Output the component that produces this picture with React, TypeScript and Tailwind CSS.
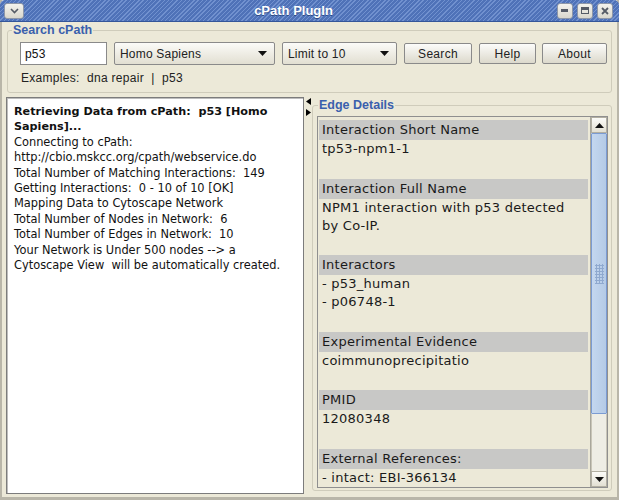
import React from "react";

const SANS = "font-['Liberation_Sans',Arial,sans-serif]";
const DEJA = "font-['DejaVu_Sans',Verdana,sans-serif]";

const WinButton = ({ children, wide }: { children: React.ReactNode; wide?: boolean }) => (
  <div
    className={`flex items-center justify-center ${
      wide ? "w-[20px]" : "w-[16px]"
    } h-[16px] rounded-[3px] border border-[#8e97a8] bg-gradient-to-b from-[#f4f3ee] to-[#d9d7cd]`}
  >
    {children}
  </div>
);

const Combo = ({ label, width }: { label: string; width: string }) => (
  <div
    className={`${width} h-[23px] flex items-center justify-between pl-[5px] pr-[7px] rounded-[2px] border border-[#8a8a8a] bg-gradient-to-b from-[#fbfbf8] to-[#e2dfd2] text-[12px] tracking-[0.2px] text-[#222]`}
  >
    <span>{label}</span>
    <svg width="9" height="5" viewBox="0 0 9 5">
      <polygon points="0,0 9,0 4.5,5" fill="#111" />
    </svg>
  </div>
);

const Button = ({ label, width }: { label: string; width: string }) => (
  <div
    className={`${width} h-[21px] flex items-center justify-center rounded-[2px] border border-[#8a8a8a] bg-gradient-to-b from-[#fcfcfa] to-[#dcd9cc] text-[12px] tracking-[0.3px] text-[#222]`}
  >
    {label}
  </div>
);

const Section = ({ title, lines }: { title: string; lines: string[] }) => (
  <div className="mb-[20.5px]">
    <div className="h-[20px] leading-[20px] bg-[#c8c8c6] pl-[3px] tracking-[0.25px]">{title}</div>
    {lines.map((l) => (
      <div key={l} className="leading-[18px] pl-[3px] tracking-[0.25px] whitespace-nowrap">
        {l}
      </div>
    ))}
  </div>
);

const logLines = [
  "Connecting to cPath:",
  "http://cbio.mskcc.org/cpath/webservice.do",
  "Total Number of Matching Interactions:  149",
  "Getting Interactions:  0 - 10 of 10 [OK]",
  "Mapping Data to Cytoscape Network",
  "Total Number of Nodes in Network:  6",
  "Total Number of Edges in Network:  10",
  "Your Network is Under 500 nodes --> a",
  "Cytoscape View  will be automatically created.",
];

export default function App() {
  return (
    <div className={`w-[619px] h-[500px] flex flex-col bg-[#ece9d8] border-x-[2px] border-b-[3px] border-[#b9b6a9] ${SANS}`}>
      {/* title bar */}
      <div className="h-[22px] -mx-[2px] flex items-center justify-between px-[4px] rounded-t-[5px] border-b border-[#34569a] bg-[repeating-linear-gradient(135deg,#4f72b8_0px,#4f72b8_2px,#7191cf_2px,#7191cf_3px)]">
        <WinButton wide>
          <svg width="9" height="6" viewBox="0 0 9 6">
            <polyline points="1,1 4.5,4.5 8,1" fill="none" stroke="#555b66" strokeWidth="1.6" />
          </svg>
        </WinButton>
        <div className="text-white font-bold text-[13px] ml-[6px] [text-shadow:0_1px_0_#2d4a85]">cPath PlugIn</div>
        <div className="flex gap-[4px] pr-[2px]">
          <WinButton>
            <div className="w-[7px] h-[3px] bg-[#555b66]" />
          </WinButton>
          <WinButton>
            <div className="w-[8px] h-[7px] border-[1.5px] border-t-[3px] border-[#555b66]" />
          </WinButton>
          <WinButton>
            <svg width="8" height="8" viewBox="0 0 8 8">
              <path d="M1 1 L7 7 M7 1 L1 7" stroke="#555b66" strokeWidth="1.8" />
            </svg>
          </WinButton>
        </div>
      </div>

      <div className="flex-1 flex flex-col pl-[4px] pr-[5px]">
        {/* search group */}
        <fieldset className="mt-[1px] ml-[1px] border border-[#cfccbb] rounded-[3px]">
          <legend className="ml-[4px] px-[1px] text-[12.5px] leading-[15px] font-bold text-[#3a60ad]">Search cPath</legend>
          <div className="pl-[12px] pt-[4px]">
            <div className="flex items-center">
              <div className="w-[87px] h-[23px] bg-white border border-[#8a8a8a] flex items-center pl-[4px] text-[12px] tracking-[0.2px] text-[#111]">
                p53
              </div>
              <div className="ml-[7px]">
                <Combo label="Homo Sapiens" width="w-[161px]" />
              </div>
              <div className="ml-[7px]">
                <Combo label="Limit to 10" width="w-[115px]" />
              </div>
              <div className="ml-[7px]">
                <Button label="Search" width="w-[68px]" />
              </div>
              <div className="ml-[7px]">
                <Button label="Help" width="w-[57px]" />
              </div>
              <div className="ml-[6px]">
                <Button label="About" width="w-[65px]" />
              </div>
            </div>
            <div className="mt-[6px] pb-[6px] pl-[1px] text-[12px] tracking-[0.3px] leading-[15px] text-[#222] whitespace-pre">
              Examples:  dna repair  |  p53
            </div>
          </div>
        </fieldset>

        {/* split area */}
        <div className="mt-[4px] h-[397px] flex">
          <div className={`w-[298px] h-full bg-white border border-[#7c7c7c] shadow-[inset_1px_1px_0_#bdbdbd] pl-[7px] pt-[6px] text-[11.4px] leading-[15.4px] text-[#111] ${DEJA}`}>
            <div className="font-bold text-[11.2px]">
              Retrieving Data from cPath:&nbsp; p53 [Homo
              <br />
              Sapiens]...
            </div>
            {logLines.map((l) => (
              <div key={l} className="whitespace-pre">
                {l}
              </div>
            ))}
          </div>

          {/* divider */}
          <div className="w-[8px] flex flex-col items-start pt-[1px] pl-[2px] gap-[4px]">
            <svg width="5" height="7" viewBox="0 0 5 7">
              <polygon points="5,0 5,7 0,3.5" fill="#000" />
            </svg>
            <svg width="5" height="7" viewBox="0 0 5 7">
              <polygon points="0,0 0,7 5,3.5" fill="#000" />
            </svg>
          </div>

          {/* edge details */}
          <fieldset className="flex-1 h-[393px] mt-[1px] border border-[#cfccbb] rounded-[3px] flex flex-col min-h-0">
            <legend className="ml-[5px] px-[1px] text-[12.5px] leading-[15px] font-bold text-[#3a60ad]">Edge Details</legend>
            <div className="flex-1 min-h-0 ml-[4px] mr-[3px] mt-[3px] mb-[2px] flex border border-[#8f8f8f]">
              <div className={`flex-1 overflow-hidden pt-[3px] pl-[1px] pr-[2px] text-[13px] text-[#1a1a1a] ${DEJA}`}>
                <Section title="Interaction Short Name" lines={["tp53-npm1-1"]} />
                <Section title="Interaction Full Name" lines={["NPM1 interaction with p53 detected", "by Co-IP."]} />
                <Section title="Interactors" lines={["- p53_human", "- p06748-1"]} />
                <Section title="Experimental Evidence" lines={["coimmunoprecipitatio"]} />
                <Section title="PMID" lines={["12080348"]} />
                <Section title="External References:" lines={["- intact: EBI-366134"]} />
              </div>
              {/* scrollbar */}
              <div className="w-[17px] flex flex-col border-l border-[#a9a79c] bg-[#eeede5]">
                <div className="h-[16px] flex items-center justify-center border border-[#b2afa2] bg-gradient-to-b from-[#fbfbf8] to-[#e3e0d3]">
                  <svg width="9" height="5" viewBox="0 0 9 5">
                    <polygon points="0,5 9,5 4.5,0" fill="#111" />
                  </svg>
                </div>
                <div className="h-[281px] flex items-center justify-center border border-[#7b9bd2] rounded-[1px] bg-gradient-to-r from-[#c4d7ef] to-[#b4cae6]">
                  <div className="w-[9px] h-[20px] bg-[radial-gradient(circle,#8fa9cf_1px,transparent_1.2px)] bg-[length:3px_3px]" />
                </div>
                <div className="flex-1 border-x border-[#c8c5b8]" />
                <div className="h-[16px] flex items-center justify-center border border-[#b2afa2] bg-gradient-to-b from-[#fbfbf8] to-[#e3e0d3]">
                  <svg width="9" height="5" viewBox="0 0 9 5">
                    <polygon points="0,0 9,0 4.5,5" fill="#111" />
                  </svg>
                </div>
              </div>
            </div>
          </fieldset>
        </div>
      </div>
    </div>
  );
}
